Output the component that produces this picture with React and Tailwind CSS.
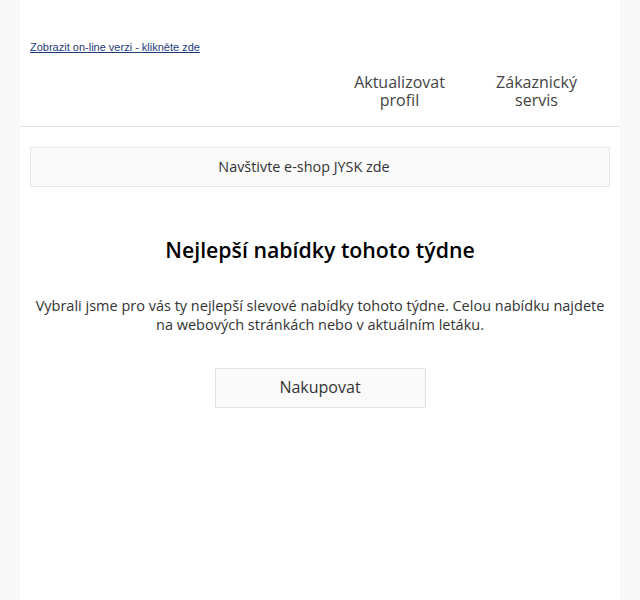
import React from 'react';

export default function App() {
  return (
    <div className="min-h-[600px] bg-[#f8f8f8] font-['Open_Sans',sans-serif]">
      <div className="mx-auto w-[600px] min-h-[600px] bg-white">
        <div className="px-[10px] pt-[33px]">
          <a href="#" className="font-['Liberation_Sans',Arial,sans-serif] text-[11px] leading-[14px] text-[#1d3c78] underline">
            Zobrazit on-line verzi - klikněte zde
          </a>
        </div>
        <div className="flex justify-end pr-[15px] pt-[16px] pb-[17px] border-b border-[#e3e3e3]">
          <a href="#" className="w-[137px] text-center text-[16px] leading-[18px] text-[#444]">
            Aktualizovat<br />profil
          </a>
          <a href="#" className="w-[137px] text-center text-[16px] leading-[18px] text-[#444]">
            Zákaznický<br />servis
          </a>
        </div>
        <div className="px-[10px] pt-[20px]">
          <a href="#" className="flex h-[40px] items-center justify-center border border-[#e5e5e5] bg-[#fafafa] pr-[32px] text-[14.4px] text-[#333]">
            Navštivte e-shop JYSK zde
          </a>
        </div>
        <div className="px-[15px] pt-[48px] text-center">
          <h1 className="text-[21.3px] leading-[30px] font-semibold text-black">Nejlepší nabídky tohoto týdne</h1>
          <p className="mt-[31px] text-[14.5px] leading-[19px] text-[#333]">
            Vybrali jsme pro vás ty nejlepší slevové nabídky tohoto týdne. Celou nabídku najdete na webových stránkách nebo v aktuálním letáku.
          </p>
          <div className="flex justify-center pt-[34px]">
            <a href="#" className="flex h-[40px] w-[211px] items-center justify-center border border-[#e2e2e2] bg-[#fafafa] pb-[3px] text-[16px] text-[#333]">
              Nakupovat
            </a>
          </div>
        </div>
      </div>
    </div>
  );
}
